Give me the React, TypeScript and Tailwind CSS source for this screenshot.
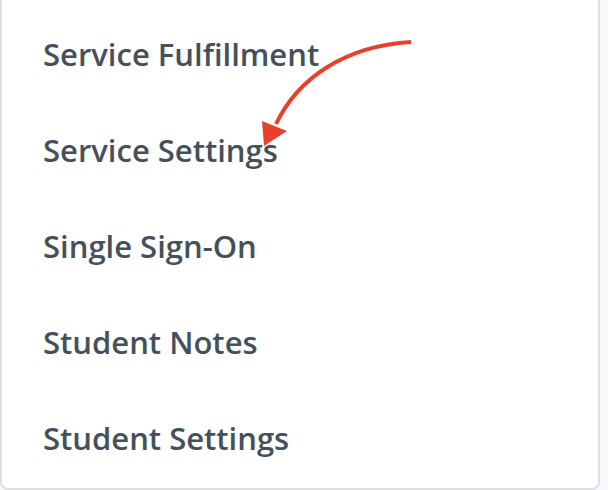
const items = [
  "Service Fulfillment",
  "Service Settings",
  "Single Sign-On",
  "Student Notes",
  "Student Settings",
];

const CurvedArrow = () => (
  <svg
    className="absolute left-0 top-0 pointer-events-none"
    width="608"
    height="490"
    viewBox="0 0 608 490"
  >
    <path
      d="M411 42 C 345 46, 298 78, 276 124"
      fill="none"
      stroke="#e8412b"
      strokeWidth="4"
    />
    <polygon points="262,121 287,131 264,146" fill="#e8412b" />
  </svg>
);

export default function App() {
  return (
    <div className="relative w-[608px] h-[490px] bg-[#f7f8fc] overflow-hidden">
      <div className="absolute -top-10 left-0 w-[600px] h-[530px] bg-white border-2 border-[#dedfe2] rounded-b-lg">
        <div className="flex flex-col pt-[77px] pl-[41px]">
          {items.map((label) => (
            <div
              key={label}
              className="h-[96px] flex items-start text-[31px] font-semibold text-[#46505b] leading-none"
              style={{ fontFamily: "'Open Sans', 'Noto Sans', sans-serif" }}
            >
              {label}
            </div>
          ))}
        </div>
      </div>
      <CurvedArrow />
    </div>
  );
}
